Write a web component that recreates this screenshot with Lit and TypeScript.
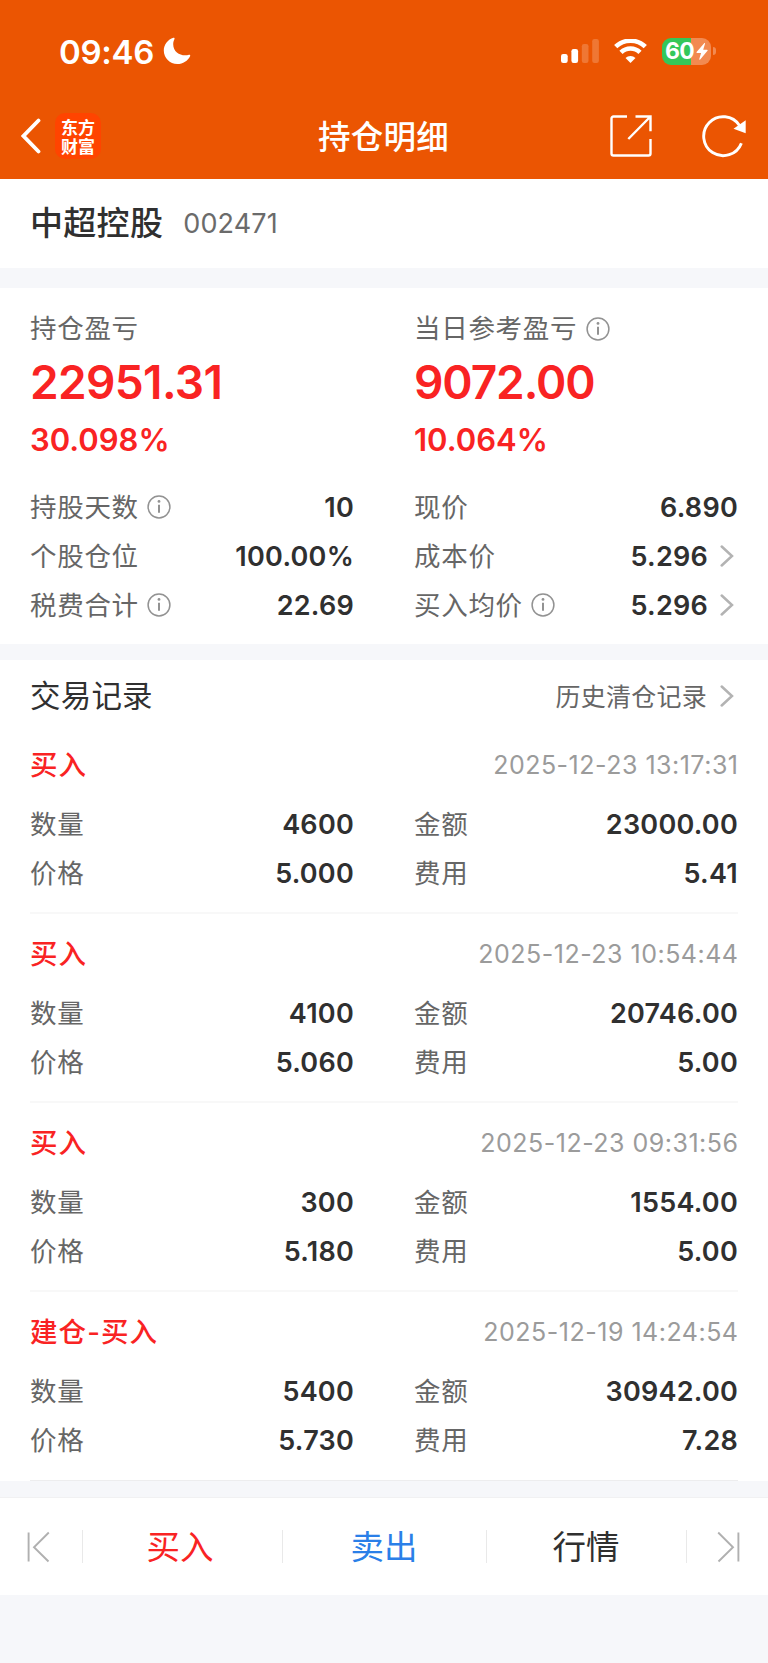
import { LitElement, html, css, svg, nothing } from "lit";
import { customElement } from "lit/decorators.js";

interface Stat {
  label: string;
  value: string;
  info?: boolean;
  link?: boolean;
}

interface Trade {
  type: string;
  time: string;
  quantity: string;
  amount: string;
  price: string;
  fee: string;
}

const STATS: Stat[] = [
  { label: "持股天数", value: "10", info: true },
  { label: "现价", value: "6.890" },
  { label: "个股仓位", value: "100.00%" },
  { label: "成本价", value: "5.296", link: true },
  { label: "税费合计", value: "22.69", info: true },
  { label: "买入均价", value: "5.296", info: true, link: true },
];

const TRADES: Trade[] = [
  { type: "买入", time: "2025-12-23 13:17:31", quantity: "4600", amount: "23000.00", price: "5.000", fee: "5.41" },
  { type: "买入", time: "2025-12-23 10:54:44", quantity: "4100", amount: "20746.00", price: "5.060", fee: "5.00" },
  { type: "买入", time: "2025-12-23 09:31:56", quantity: "300", amount: "1554.00", price: "5.180", fee: "5.00" },
  { type: "建仓-买入", time: "2025-12-19 14:24:54", quantity: "5400", amount: "30942.00", price: "5.730", fee: "7.28" },
];

const infoIcon = html`<svg class="info" width="24" height="24" viewBox="0 0 24 24" fill="none" stroke="#929292">
  <circle cx="12" cy="12" r="10.9" stroke-width="1.5" />
  <path d="M12 9.8v8" stroke-width="2" />
  <circle cx="12" cy="6.4" r="1.4" fill="#929292" stroke="none" />
</svg>`;

const chevron = html`<svg class="chevron" width="14" height="22" viewBox="0 0 14 22" fill="none">
  <path d="M1.7 1.5 12 11 1.7 20.5" stroke="#b3b3b3" stroke-width="2.5" stroke-linecap="round" />
</svg>`;

@customElement("app-root")
export class AppRoot extends LitElement {
  static styles = css`
    :host {
      display: flex;
      flex-direction: column;
      min-height: 1663px;
      background: #f6f7fa;
      color: #303030;
      font-family: Inter, "Noto Sans CJK SC", sans-serif;
      --zh: "Noto Sans CJK SC", sans-serif;
    }
    svg {
      display: block;
      flex: none;
    }
    .header {
      height: 179px;
      background: #eb5502;
      color: #fff;
    }
    .status {
      box-sizing: border-box;
      height: 102px;
      padding: 0 52px 0 59px;
      display: flex;
      align-items: center;
      justify-content: space-between;
    }
    .clock,
    .signals {
      display: flex;
      align-items: center;
    }
    .clock {
      font-size: 33px;
      font-weight: 600;
      letter-spacing: -0.3px;
      gap: 9px;
    }
    .clock span {
      padding-top: 1px;
    }
    .wifi {
      margin-left: 14px;
    }
    .battery {
      margin-left: 15px;
      width: 49px;
      height: 27px;
      border-radius: 9px;
      background: linear-gradient(90deg, #34c759 60%, #f28a51 60%);
      display: flex;
      align-items: center;
      justify-content: center;
      font-size: 23px;
      font-weight: 700;
      letter-spacing: -0.6px;
      gap: 2px;
    }
    .nub {
      width: 3px;
      height: 8px;
      margin-left: 2px;
      border-radius: 0 3px 3px 0;
      background: #f28a51;
    }
    .nav {
      height: 68px;
      padding: 0 22px 0 21px;
      display: grid;
      grid-template-columns: 1fr auto 1fr;
      align-items: center;
    }
    .back,
    .actions {
      display: flex;
      align-items: center;
    }
    .back {
      gap: 13px;
    }
    .logo {
      width: 46px;
      height: 46px;
      border-radius: 10px;
      background: #ff4400;
      display: flex;
      align-items: center;
      justify-content: center;
      font: 700 17px/19.5px var(--zh);
    }
    .title {
      font: 500 32.5px/40px var(--zh);
      letter-spacing: 0.2px;
      padding-bottom: 3px;
    }
    .actions {
      justify-content: flex-end;
      gap: 50px;
    }
    .stock {
      box-sizing: border-box;
      height: 89px;
      padding: 0 30px;
      display: flex;
      align-items: center;
      gap: 20px;
      background: #fff;
    }
    .name {
      font: 500 33px/40px var(--zh);
      letter-spacing: 0.3px;
      padding-bottom: 5px;
    }
    .code {
      font-size: 27px;
      color: #6b6b6b;
      letter-spacing: 0.15px;
    }
    .summary {
      box-sizing: border-box;
      height: 356px;
      margin-top: 20px;
      padding: 20px 30px 0;
      background: #fff;
    }
    .pair {
      display: grid;
      grid-template-columns: 324px 324px;
      column-gap: 60px;
    }
    .label {
      display: flex;
      align-items: center;
      font: 400 26.5px/38px var(--zh);
      padding-bottom: 2px;
      letter-spacing: 0.7px;
      color: #666;
    }
    .info {
      margin: 3px 0 0 8.5px;
    }
    .profit {
      height: 69px;
      line-height: 69px;
      font-size: 46px;
      font-weight: 600;
      letter-spacing: -0.65px;
      color: #f92323;
    }
    .tight {
      letter-spacing: -1.1px;
    }
    .rate {
      height: 46px;
      line-height: 46px;
      font-size: 31px;
      font-weight: 600;
      color: #f92323;
    }
    .stats {
      margin-top: 19px;
    }
    .row {
      height: 49.2px;
      display: flex;
      align-items: center;
      justify-content: space-between;
    }
    .value {
      display: flex;
      align-items: center;
      padding-top: 1px;
      font-size: 27px;
      font-weight: 600;
      letter-spacing: 0.25px;
    }
    .chevron {
      margin: 0 4px 0 12px;
    }
    .records {
      margin-top: 16px;
      height: 821px;
      background: #fff;
    }
    .heading {
      box-sizing: border-box;
      height: 65px;
      padding: 7px 30px 0;
      display: flex;
      align-items: center;
      justify-content: space-between;
    }
    .section {
      font: 400 30.5px/40px var(--zh);
      letter-spacing: 0.2px;
      padding-bottom: 4px;
    }
    .history {
      display: flex;
      align-items: center;
      font: 400 25px/40px var(--zh);
      letter-spacing: 0.25px;
      color: #666;
    }
    .history span {
      padding: 0 1px 3px 0;
    }
    .trade {
      box-sizing: border-box;
      height: 189px;
      margin: 0 30px;
      padding-top: 20px;
      border-bottom: 2px solid #f8f8f8;
    }
    .trade:last-child {
      border-bottom: 1px solid #ededee;
    }
    .top {
      height: 40px;
      margin-bottom: 14px;
      display: flex;
      align-items: center;
      justify-content: space-between;
    }
    .type {
      font: 500 27.5px/40px Inter, var(--zh);
      letter-spacing: 1.1px;
      color: #f92323;
    }
    .time {
      font-size: 25px;
      letter-spacing: 0.5px;
      margin-right: -0.5px;
      color: #9b9b9b;
    }
    .toolbar {
      box-sizing: border-box;
      height: 98px;
      margin-top: 16px;
      border-top: 1px solid #f1f1f2;
      background: #fff;
      display: grid;
      grid-template-columns: 82px 200px 204px 200px 82px;
      align-items: center;
    }
    .tab {
      box-sizing: border-box;
      height: 33px;
      border-left: 1px solid #e9e9e9;
      display: flex;
      align-items: center;
      justify-content: center;
      font: 400 33.5px/40px var(--zh);
      padding: 0 1px 3px 0;
    }
    .tab.buy {
      padding-right: 5px;
    }
    .edge {
      padding-left: 27px;
    }
    .edge.last {
      box-sizing: border-box;
      height: 33px;
      border-left: 1px solid #e9e9e9;
      display: flex;
      align-items: center;
      padding-left: 30px;
    }
    .buy {
      color: #f92323;
    }
    .sell {
      color: #2a7fe8;
    }
  `;

  private stat(s: Stat) {
    return html`<div class="row">
      <span class="label">${s.label}${s.info ? infoIcon : nothing}</span>
      <span class="value">${s.value}${s.link ? chevron : nothing}</span>
    </div>`;
  }

  private trade(t: Trade) {
    return html`<article class="trade">
      <div class="top"><span class="type">${t.type}</span><time class="time">${t.time}</time></div>
      <div class="pair">
        ${this.stat({ label: "数量", value: t.quantity })}
        ${this.stat({ label: "金额", value: t.amount })}
        ${this.stat({ label: "价格", value: t.price })}
        ${this.stat({ label: "费用", value: t.fee })}
      </div>
    </article>`;
  }

  private statusBar() {
    const bars = [
      [0, 9, 1],
      [10.4, 14, 1],
      [20.8, 19, 0.2],
      [31.2, 24, 0.2],
    ];
    return html`<div class="status">
      <div class="clock">
        <span>09:46</span>
        <svg width="28" height="28" viewBox="0 0 28 28" fill="#fff">
          <path d="M10.4.8C5 2.4.8 7.5.8 13.5.8 21 6.8 27 14.3 27c5.700 0 10.600-3.300 12.900-8.100.3-.8-.4-1.500-1.200-1.200C19 19.800 10.200 16 10.200 7.200c0-1.900.5-3.600 1.300-5.100C11.900 1.300 11.200.5 10.400.8Z" />
        </svg>
      </div>
      <div class="signals">
        <svg width="39" height="24" viewBox="0 0 39 24" fill="#fff">
          ${bars.map(([x, h, o]) => svg`<rect x=${x} y=${24 - h} width="6.7" height=${h} rx="2.2" opacity=${o} />`)}
        </svg>
        <svg class="wifi" width="33" height="24" viewBox="0 0 33 24" fill="none" stroke="#fff">
          <path d="M1.7 7.7a21.3 21.3 0 0 1 29.6 0" stroke-width="4.6" />
          <path d="M7 13.3a13.6 13.6 0 0 1 19 0" stroke-width="4.6" />
          <path d="M16.5 24l-5-5.100a7.200 7.200 0 0 1 10 0Z" fill="#fff" stroke="none" />
        </svg>
        <div class="battery">
          <span>60</span>
          <svg width="12" height="17" viewBox="0 0 12 17" fill="#fff">
            <path d="M8.200.3.6 8.900c-.4.500-.1 1 .5 1h4L3.300 16c-.2.800.4 1 .9.400l7.300-8.600c.4-.5.1-1-.5-1H7.200L9 .8C9.200 0 8.700-.2 8.200.3Z" />
          </svg>
        </div>
        <div class="nub"></div>
      </div>
    </div>`;
  }

  render() {
    return html`
      <header class="header">
        ${this.statusBar()}
        <nav class="nav">
          <div class="back">
            <svg width="21" height="36" viewBox="0 0 21 36" fill="none">
              <path d="M17.5 2.5 2.500 18l15 15.500" stroke="#fff" stroke-width="3.8" stroke-linecap="round" />
            </svg>
            <div class="logo"><span>东方<br />财富</span></div>
          </div>
          <div class="title">持仓明细</div>
          <div class="actions">
            <svg width="42" height="42" viewBox="0 0 42 42" fill="none" stroke="#fff" stroke-width="2.4">
              <path d="M17 1.5H3.500a2 2 0 0 0-2 2v35a2 2 0 0 0 2 2h35a2 2 0 0 0 2-2V24" />
              <path d="M25.500 1.500h15v14.800M40 2 18.300 24" />
            </svg>
            <svg width="44" height="44" viewBox="0 0 44 44" fill="none">
              <path d="M39.400 29.200A19.500 19.500 0 1 1 37.500 11.500" stroke="#fff" stroke-width="2.9" />
              <path d="M43.700 6.300v12.900L31.500 14.800Z" fill="#fff" />
            </svg>
          </div>
        </nav>
      </header>

      <section class="stock"><span class="name">中超控股</span><span class="code">002471</span></section>

      <section class="summary">
        <div class="pair">
          <div>
            <div class="label">持仓盈亏</div>
            <div class="profit">22951.31</div>
            <div class="rate">30.098%</div>
          </div>
          <div>
            <div class="label">当日参考盈亏${infoIcon}</div>
            <div class="profit tight">9072.00</div>
            <div class="rate">10.064%</div>
          </div>
        </div>
        <div class="pair stats">${STATS.map((s) => this.stat(s))}</div>
      </section>

      <section class="records">
        <div class="heading">
          <span class="section">交易记录</span>
          <span class="history"><span>历史清仓记录</span>${chevron}</span>
        </div>
        ${TRADES.map((t) => this.trade(t))}
      </section>

      <footer class="toolbar">
        <div class="edge">
          <svg width="24" height="32" viewBox="0 0 24 32" fill="none" stroke="#b0b0b0" stroke-width="1.9">
            <path d="M1.600 1.500v29M21.800 1.500 7 16.300l14.500 14.200" />
          </svg>
        </div>
        <div class="tab buy">买入</div>
        <div class="tab sell">卖出</div>
        <div class="tab">行情</div>
        <div class="edge last">
          <svg width="24" height="32" viewBox="0 0 24 32" fill="none" stroke="#b0b0b0" stroke-width="1.9">
            <path d="M21.400 1.500v29M1.200 1.500 16 16.300 1.500 30.500" />
          </svg>
        </div>
      </footer>
    `;
  }
}
